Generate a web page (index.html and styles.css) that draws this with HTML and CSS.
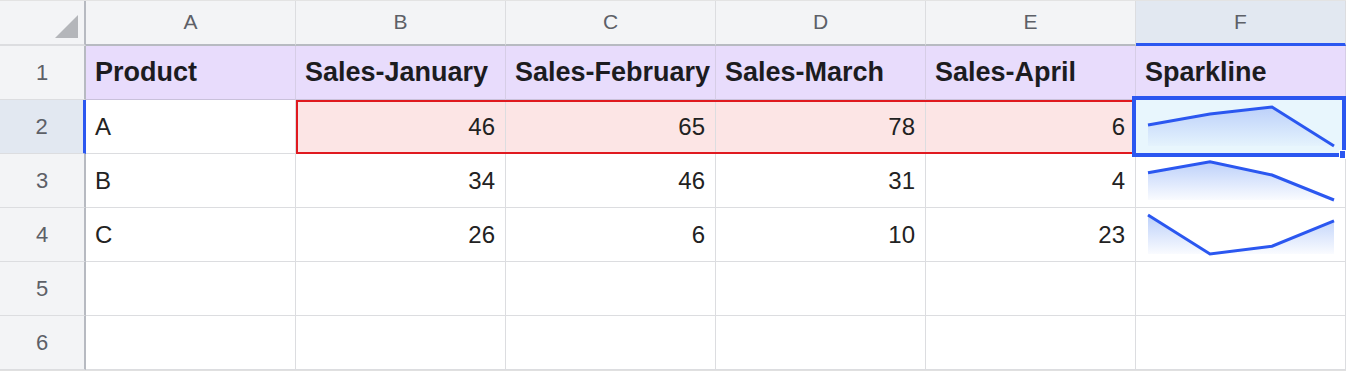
FILE: index.html
```html
<!DOCTYPE html>
<html>
<head>
<meta charset="utf-8">
<link rel="stylesheet" href="styles.css">
</head>
<body>
<div class="sheet">
  <div class="corner"><svg class="tri" width="23" height="23" viewBox="0 0 23 23"><polygon points="0,23 23,0 23,23" fill="#b4b6ba"/></svg></div>
  <div class="colh">A</div>
  <div class="colh">B</div>
  <div class="colh">C</div>
  <div class="colh">D</div>
  <div class="colh">E</div>
  <div class="colh colh-sel">F</div>

  <div class="rowh">1</div>
  <div class="cell hdr">Product</div>
  <div class="cell hdr">Sales-January</div>
  <div class="cell hdr">Sales-February</div>
  <div class="cell hdr">Sales-March</div>
  <div class="cell hdr">Sales-April</div>
  <div class="cell hdr">Sparkline</div>

  <div class="rowh rowh-sel">2</div>
  <div class="cell">A</div>
  <div class="cell num pink range-first">46</div>
  <div class="cell num pink">65</div>
  <div class="cell num pink">78</div>
  <div class="cell num pink range-last">6</div>
  <div class="cell spark cyan">
    <svg class="sl" viewBox="0 0 209 53" width="209" height="53">
      <defs>
        <linearGradient id="g" x1="0" y1="0" x2="0" y2="1">
          <stop offset="0" stop-color="#bcd0fa"/>
          <stop offset="1" stop-color="#bcd0fa" stop-opacity="0.08"/>
        </linearGradient>
      </defs>
      <polygon points="12,25 74,14 136,7 198,46 12,46" fill="url(#g)"/>
      <polyline points="12,25 74,14 136,7 198,46" fill="none" stroke="#2b57f0" stroke-width="3"/>
    </svg>
    <div class="selection"><span class="handle"></span></div>
  </div>

  <div class="rowh">3</div>
  <div class="cell">B</div>
  <div class="cell num">34</div>
  <div class="cell num">46</div>
  <div class="cell num">31</div>
  <div class="cell num">4</div>
  <div class="cell spark">
    <svg class="sl" viewBox="0 0 209 53" width="209" height="53">
      <polygon points="12,18.7 74,7.7 136,21 198,46 12,46" fill="url(#g)"/>
      <polyline points="12,18.7 74,7.7 136,21 198,46" fill="none" stroke="#2b57f0" stroke-width="3"/>
    </svg>
  </div>

  <div class="rowh">4</div>
  <div class="cell">C</div>
  <div class="cell num">26</div>
  <div class="cell num">6</div>
  <div class="cell num">10</div>
  <div class="cell num">23</div>
  <div class="cell spark">
    <svg class="sl" viewBox="0 0 209 53" width="209" height="53">
      <polygon points="12,7 74,46 136,38.2 198,12.9 198,46 12,46" fill="url(#g)"/>
      <polyline points="12,7 74,46 136,38.2 198,12.9" fill="none" stroke="#2b57f0" stroke-width="3"/>
    </svg>
  </div>

  <div class="rowh">5</div>
  <div class="cell"></div><div class="cell"></div><div class="cell"></div><div class="cell"></div><div class="cell"></div><div class="cell"></div>

  <div class="rowh">6</div>
  <div class="cell"></div><div class="cell"></div><div class="cell"></div><div class="cell"></div><div class="cell"></div><div class="cell"></div>
</div>
</body>
</html>
```

FILE: styles.css
```css
* { box-sizing: border-box; }
html, body { margin: 0; padding: 0; background: #ffffff; }
body { font-family: "Liberation Sans", Arial, sans-serif; color: #1f1f1f; }

.sheet {
  display: grid;
  grid-template-columns: 86px repeat(6, 210px);
  grid-template-rows: 45px repeat(6, 54px);
  width: max-content;
  border-top: 1px solid #e3e3e3;
  border-bottom: 1px solid #e0e0e0;
}

.corner {
  background: #f3f4f6;
  border-right: 2px solid #b7bac1;
  border-bottom: 2px solid #dcdde0;
  display: flex;
  justify-content: flex-end;
  align-items: flex-end;
  padding: 0 6px 6px 0;
}
.tri { display: block; }

.colh {
  background: #f3f4f6;
  border-right: 1px solid #dcdde0;
  border-bottom: 2px solid #b7bac1;
  display: flex;
  align-items: center;
  justify-content: center;
  font-size: 21px;
  color: #5d6067;
  padding-bottom: 1px;
}
.colh-sel {
  background: #e2e8f1;
  border-bottom: 3px solid #2b57f0;
}

.rowh {
  background: #f3f4f6;
  border-right: 2px solid #b7bac1;
  border-bottom: 1px solid #dcdde0;
  display: flex;
  align-items: center;
  justify-content: center;
  font-size: 22px;
  color: #5d6067;
}
.rowh-sel {
  background: #e2e8f1;
  border-right: 3px solid #2b57f0;
}

.cell {
  position: relative;
  border-right: 1px solid #dcdde0;
  border-bottom: 1px solid #dcdde0;
  display: flex;
  align-items: center;
  padding: 0 10px 0 9px;
  font-size: 24px;
  color: #222;
  background: #fff;
  white-space: nowrap;
}
.cell.hdr {
  background: #e8dcfc;
  border-bottom-color: #c9c1da;
  border-right-color: #d6cde6;
  font-weight: bold;
  font-size: 27px;
  color: #1c1c1f;
}
.cell.num { justify-content: flex-end; }
.cell.pink { background: #fce5e5; }
.cell.pink::after {
  content: "";
  position: absolute;
  left: 0;
  right: -1px;
  top: 0;
  bottom: -1px;
  border-top: 2px solid #e0191f;
  border-bottom: 2px solid #e0191f;
  pointer-events: none;
}
.cell.range-first::after { border-left: 2px solid #e0191f; }
.cell.range-last::after { border-right: 2px solid #e0191f; }
.cell.cyan { background: #e8f6fd; }
.cell.spark { padding: 0; align-items: flex-start; }
.sl { display: block; }

.selection {
  position: absolute;
  left: -4px;
  top: -4px;
  right: -1px;
  bottom: -4px;
  border: 4px solid #2b57f0;
  z-index: 3;
  pointer-events: none;
}
.handle {
  position: absolute;
  right: -4px;
  bottom: -6px;
  width: 7px;
  height: 9px;
  background: #2b57f0;
  border: 1px solid #fff;
}
```
